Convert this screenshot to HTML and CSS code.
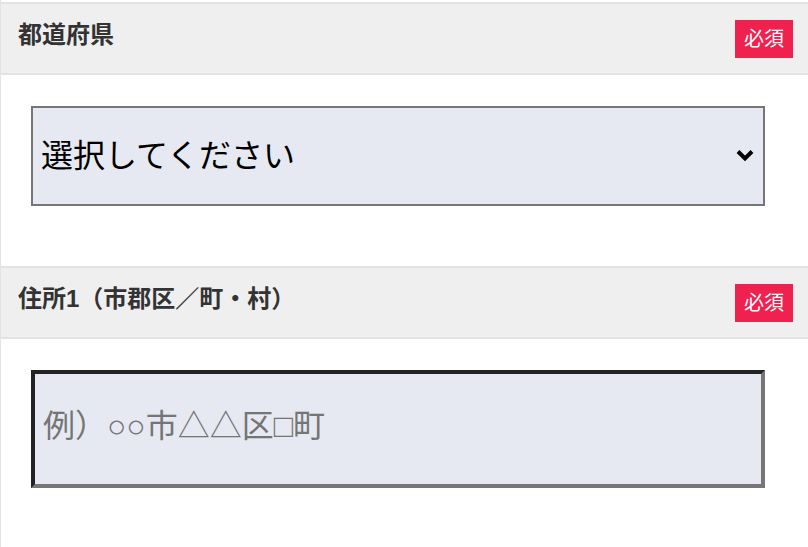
FILE: index.html
```html
<!DOCTYPE html>
<html lang="ja">
<head>
<meta charset="utf-8">
<title>住所入力</title>
<link rel="stylesheet" href="styles.css">
</head>
<body>
<div class="form">
  <section class="field">
    <div class="field-head">
      <label class="field-label" for="pref">都道府県</label>
      <span class="badge">必須</span>
    </div>
    <div class="field-body field-body-select">
      <div class="select-wrap">
        <select id="pref" class="select">
          <option>選択してください</option>
        </select>
        <svg class="chevron" viewBox="0 0 18 13" width="18" height="13" aria-hidden="true">
          <path d="M2 2.5 L9 9.5 L16 2.5" fill="none" stroke="#000" stroke-width="4" stroke-linecap="butt" stroke-linejoin="miter"/>
        </svg>
      </div>
    </div>
  </section>
  <section class="field">
    <div class="field-head">
      <label class="field-label" for="addr1">住所1（市郡区／町・村）</label>
      <span class="badge">必須</span>
    </div>
    <div class="field-body">
      <input id="addr1" class="input" type="text" placeholder="例）○○市△△区□町">
    </div>
  </section>
</div>
</body>
</html>
```
FILE: styles.css
```css
html, body {
  margin: 0;
  padding: 0;
  background: #fff;
}
body {
  font-family: "Liberation Sans", "Noto Sans CJK JP", sans-serif;
  color: #333;
}
.form {
  padding-top: 2px;
  border-left: 1px solid #e3e3e3;
  min-height: 545px;
}
.field-head {
  display: flex;
  justify-content: space-between;
  align-items: flex-start;
  background: #efefef;
  border-top: 2px solid #e3e3e3;
  border-bottom: 2px solid #e3e3e3;
  padding: 16px 15px 15px 17px;
  height: 38px;
}
.field-label {
  font-size: 24px;
  font-weight: 700;
  line-height: 30px;
  color: #333;
}
.badge {
  background: #f0204f;
  color: #fff;
  font-size: 20px;
  line-height: 38px;
  height: 38px;
  padding: 0 9px;
}
.field-body {
  padding: 31px 30px 0;
}
.field-body-select {
  padding-bottom: 60px;
}
.select-wrap {
  position: relative;
  width: 734px;
}
.select {
  appearance: none;
  -webkit-appearance: none;
  display: block;
  box-sizing: border-box;
  width: 734px;
  height: 100px;
  margin: 0;
  padding: 0 40px 0 8px;
  border: 2px solid #767676;
  border-radius: 0;
  background: #e6e9f1;
  font-family: "Liberation Sans", "Noto Sans CJK JP", sans-serif;
  font-size: 32px;
  color: #000;
  outline: none;
}
.chevron {
  display: block;
  position: absolute;
  right: 11px;
  top: 43px;
  pointer-events: none;
}
.input {
  display: block;
  box-sizing: border-box;
  width: 734px;
  height: 118px;
  margin: 0;
  padding: 0 8px 6px;
  border-style: solid;
  border-width: 4px;
  border-color: #222 #767676 #767676 #222;
  border-radius: 0;
  background: #e6e9f1;
  font-family: "Liberation Sans", "Noto Sans CJK JP", sans-serif;
  font-size: 32px;
  color: #000;
  outline: none;
}
.input::placeholder {
  color: #757575;
}
```
